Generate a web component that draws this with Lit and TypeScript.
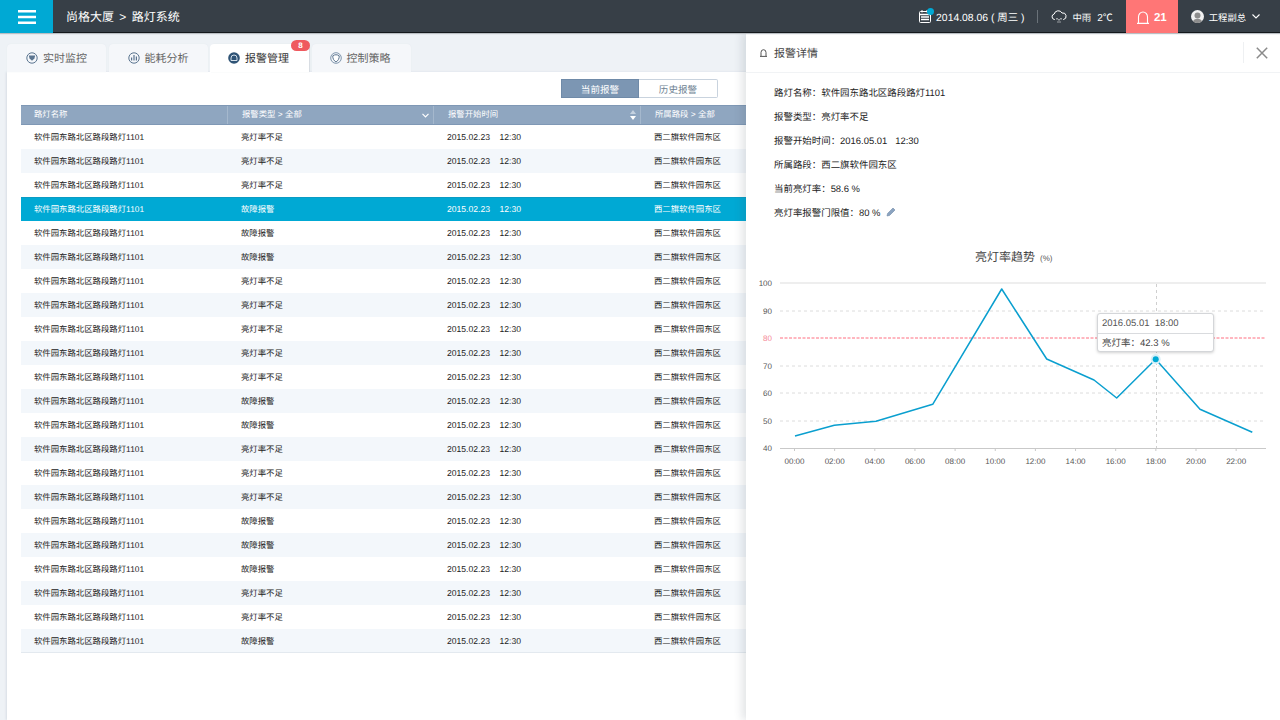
import { LitElement, html, css, svg } from "lit";
import { customElement } from "lit/decorators.js";

const A = "亮灯率不足";
const B = "故障报警";
const kinds = [A,A,A,B,B,B,A,A,A,A,A,B,B,A,A,A,B,B,B,A,A,B];
const points = "795,436 834.3,425.3 876,421.3 932.7,404.3 1001.7,289 1046.7,359 1094,380 1116.7,398 1155.7,359.3 1200,409.3 1252.3,432.3";
const yTicks: [string, number][] = [["90",311],["70",366],["60",393],["50",421]];
const xLabels = ["00:00","02:00","04:00","06:00","08:00","10:00","12:00","14:00","16:00","18:00","20:00","22:00"];

@customElement("app-root")
export class AppRoot extends LitElement {
  static styles = css`
    :host { display: block; width: 1280px; height: 720px; position: relative; overflow: hidden; text-rendering: geometricPrecision;
      font-family: "Liberation Sans", "Noto Sans CJK SC", sans-serif; background: #eef2f6; color: #333; }
    .page { display: flex; flex-direction: column; height: 720px; }
    svg { display: block; flex: none; }

    header { height: 33px; flex: none; display: flex; align-items: center; background: #373f47;
      border-bottom: 1px solid #14181c; box-sizing: border-box; box-shadow: 0 1px 1px #b9bec3; color: #fff; position: relative; z-index: 3; }
    .menu { width: 53px; height: 33px; flex: none; background: #00a9d4; display: flex; align-items: center; justify-content: center; margin-bottom: -1px; }
    .crumb { margin-left: 13px; font-size: 12px; word-spacing: 2px; white-space: nowrap; }
    .right { margin-left: auto; display: flex; align-items: center; gap: 13px; height: 33px; margin-bottom: -1px; }
    .date { display: flex; align-items: center; gap: 5px; font-size: 10.4px; white-space: nowrap; }
    .cal { position: relative; }
    .dot { position: absolute; width: 7px; height: 7px; border-radius: 50%; background: #00a9d4; top: -2px; right: -3px; }
    .sep { width: 1px; height: 13px; background: #6a7279; }
    .weather { display: flex; align-items: center; gap: 5px; font-size: 9.4px; white-space: nowrap; }
    .temp { margin-left: 1px; font-size: 10px; }
    .alert { width: 52px; height: 33px; box-sizing: border-box; padding-top: 2px; background: #ff7676; display: flex; align-items: center; justify-content: center; gap: 5px; font-size: 11.5px; font-weight: bold; }
    .user { display: flex; align-items: center; gap: 5px; font-size: 9.3px; white-space: nowrap; margin-right: 20px; }
    .chev { margin-left: 1px; }

    main { flex: 1; display: flex; flex-direction: column; padding: 11px 0 0 7px; min-height: 0; }
    .tabs { display: flex; gap: 2.5px; height: 28px; flex: none; }
    .tab { width: 99px; box-sizing: border-box; background: #f5f7fa; border-radius: 4px 4px 0 0; display: flex; align-items: center; justify-content: center; gap: 5px; font-size: 11px; color: #666; position: relative; box-shadow: 0 0 1px #dfe5ea; }
    .tab.on { background: #fff; color: #333; box-shadow: 1px 0 1px #d5dbe1; z-index: 1; padding-right: 2px; }
    .tab.end { padding-right: 2px; }
    .badge { position: absolute; right: -1px; top: -4px; width: 19px; height: 11px; border-radius: 6px; background: #ef5a5f; color: #fff; font-size: 8px; line-height: 11px; text-align: center; font-weight: bold; }
    .panel { flex: 1; background: #fff; padding: 7px 0 0 14px; box-shadow: -1px 0 2px #d8dee5; }
    .bar { display: flex; justify-content: flex-end; width: 697px; height: 19px; }
    .seg { width: 78px; height: 19px; box-sizing: border-box; font-size: 9.6px; display: flex; align-items: center; justify-content: center; color: #6d7f92; background: #fff; border: 1px solid #c9d3de; }
    .seg.on { background: #7c96b3; color: #fff; border-color: #6f8aa8; }
    .seg.off { border-left: none; width: 79px; border-radius: 0 2px 2px 0; }

    .table { margin-top: 7px; width: 725px; overflow: hidden; font-size: 8.4px; }
    .row { display: grid; grid-template-columns: 206px 206px 207px 106px; height: 24px; box-sizing: border-box; padding-bottom: 1px; align-items: center; color: #222; white-space: nowrap; }
    .row > div { padding-left: 14px; }
    .row > div:first-child { padding-left: 13px; }
    .row.alt { background: #f3f7fb; }
    .row.sel { background: #00a9d4; color: #fff; border-top: 1px solid #0a9cc4; padding-bottom: 2px; }
    .row.last { border-bottom: 1px solid #e3e9ef; padding-bottom: 0; }
    .num { font-size: 8.6px; }
    .thead { height: 20px; padding-bottom: 0; background: #8fa6c0; border-top: 1px solid #7f98b5; border-bottom: 1px solid #7f98b5; color: #fff; }
    .thead > div { height: 18px; display: flex; align-items: center; justify-content: space-between; box-sizing: border-box; padding-right: 4px; padding-bottom: 2px; }
    .thead > div + div { border-left: 1px solid #a5b8cd; }
    .thead svg { margin-top: 2px; }

    .drawer { position: absolute; left: 746px; top: 33px; right: 0; bottom: 0; background: #fff; box-shadow: -4px 0 8px rgba(60,70,85,.14); z-index: 2; }
    .dhead { height: 40px; box-sizing: border-box; border-bottom: 1px solid #f1f3f5; display: flex; align-items: center; padding-left: 14px; gap: 7px; font-size: 11px; color: #444; }
    .close { margin-left: auto; width: 37px; height: 21px; box-sizing: border-box; border-left: 1px solid #eef0f2; display: flex; align-items: center; justify-content: center; }
    .details { padding: 7px 0 0 28px; font-size: 9.45px; color: #222; }
    .details div { height: 24px; display: flex; align-items: center; white-space: pre; }
    .details svg { margin-left: 6px; }
    .ctitle { margin-top: 23px; height: 20px; line-height: 20px; padding-left: 229px; font-size: 12px; color: #444; white-space: nowrap; }
    .ctitle span { font-size: 8px; margin-left: 5px; color: #555; }
    .chart { margin-top: 3px; position: relative; width: 534px; height: 210px; }
    .tip { position: absolute; left: 351px; top: 43px; width: 117px; height: 39px; box-sizing: border-box; background: #fff; border: 1px solid #d4d6d9; border-radius: 3px; box-shadow: 0 1px 3px rgba(0,0,0,.18); font-size: 9.5px; color: #555; }
    .tip div { height: 19px; line-height: 19px; padding-left: 4px; white-space: pre; }
    .tip div + div { border-top: 1px solid #d9dbde; color: #444; }
    text { font-family: "Liberation Sans", sans-serif; font-size: 8px; fill: #555; }
  `;

  private tabIcon(kind: number) {
    if (kind === 0) return html`<svg width="12" height="12" viewBox="0 0 12 12"><circle cx="6" cy="6" r="5.2" fill="none" stroke="#5b7590" stroke-width="1"/><path d="M2.8 3.6h6.4L8.4 6.4 6 8.8 3.6 6.4z" fill="#5b7590"/></svg>`;
    if (kind === 1) return html`<svg width="12" height="12" viewBox="0 0 12 12"><circle cx="6" cy="6" r="5.2" fill="none" stroke="#5b7590" stroke-width="1"/><path d="M3.6 5.5v3M6 3v5.500M8.400 4.500v4" stroke="#5b7590" stroke-width="1.200" fill="none"/></svg>`;
    if (kind === 2) return html`<svg width="12" height="12" viewBox="0 0 12 12"><circle cx="6" cy="6" r="5.800" fill="#2f5375"/><path d="M3 8.500V6a3 3 0 0 1 6 0v2.500z" fill="none" stroke="#d5e0ea" stroke-width="1"/></svg>`;
    return html`<svg width="12" height="12" viewBox="0 0 12 12"><circle cx="6" cy="6" r="5.300" fill="none" stroke="#7f96ad" stroke-width="1"/><path d="M2.800 3.800C4.500 2.400 7.500 2.400 9.200 3.800 9.500 6.500 8 8.800 6 10 4 8.800 2.500 6.500 2.800 3.800z" fill="#fff" stroke="#5b7590" stroke-width="1"/></svg>`;
  }

  private chart() {
    return html`<svg width="534" height="210" viewBox="746 270 534 210">
      <line x1="780" x2="1266" y1="283" y2="283" stroke="#eeeeee" stroke-width="2"/>
      ${yTicks.map(([, y]) => svg`<line x1="780" x2="1266" y1=${y} y2=${y} stroke="#dcdcdc" stroke-width="1" stroke-dasharray="3 3"/>`)}
      <line x1="780" x2="1266" y1="338" y2="338" stroke="#ff6f80" stroke-width="1" stroke-dasharray="3 1.500"/>
      <line x1="1156.500" x2="1156.500" y1="284" y2="448" stroke="#cfcfcf" stroke-width="1" stroke-dasharray="3 3"/>
      <line x1="780" x2="1266" y1="448.500" y2="448.500" stroke="#c9c9c9" stroke-width="1"/>
      ${xLabels.map((l, i) => {
        const x = 794.5 + i * 40.15;
        return svg`<line x1=${x} x2=${x} y1="449" y2="451" stroke="#c9c9c9"/><text x=${x} y="463.500" text-anchor="middle">${l}</text>`;
      })}
      <text x="772" y="286" text-anchor="end">100</text>
      ${yTicks.map(([t, y]) => svg`<text x="772" y=${y + 3} text-anchor="end">${t}</text>`)}
      <text x="772" y="341" text-anchor="end" style="fill:#f58a96">80</text>
      <text x="772" y="451" text-anchor="end">40</text>
      <polyline points=${points} fill="none" stroke="#0a9fcf" stroke-width="1.500" stroke-linejoin="round"/>
      <circle cx="1155.700" cy="359.300" r="5" fill="#d8f0f8"/>
      <circle cx="1155.700" cy="359.300" r="3" fill="#00a9d4"/>
    </svg>`;
  }

  render() {
    return html`<div class="page">
      <header>
        <div class="menu"><svg width="18" height="14" viewBox="0 0 18 14"><path d="M0 1.250h18M0 7h18M0 12.750h18" stroke="#fff" stroke-width="2.500"/></svg></div>
        <div class="crumb">尚格大厦 &gt; 路灯系统</div>
        <div class="right">
          <div class="date"><span class="cal"><svg width="12" height="13" viewBox="0 0 12 13"><rect x=".5" y="1.500" width="11" height="11" rx="1" fill="none" stroke="#fff"/><path d="M0 4.500h12M2 7h8M2 9.500h8" stroke="#fff" stroke-width="1.300"/><path d="M3 0v2.500M8 0v2.500" stroke="#fff"/></svg><i class="dot"></i></span><span>2014.08.06 ( 周三 )</span></div>
          <div class="sep"></div>
          <div class="weather"><svg width="16" height="13" viewBox="0 0 16 13"><path d="M4 9.500H3.500a2.800 2.800 0 0 1-.3-5.500A4.200 4.200 0 0 1 11 3a3.200 3.200 0 0 1 1.500 6.500H12" fill="none" stroke="#fff"/><path d="M6 8v1.500M8 9v1.500M10 8v1.500M7 11.500v1M9 11.500v1" stroke="#fff"/></svg><span>中雨</span><span class="temp">2℃</span></div>
          <div class="alert"><svg width="12" height="13" viewBox="0 0 12 13"><path d="M1.500 12V6a4.500 5 0 0 1 9 0v6M0 12.400h12" fill="none" stroke="#fff" stroke-width="1.100"/></svg><span>21</span></div>
          <div class="user"><svg width="13" height="13" viewBox="0 0 13 13"><circle cx="6.500" cy="6.500" r="6.500" fill="#f1f1f1"/><circle cx="6.500" cy="5.500" r="3" fill="#8d8d8d"/><path d="M2 11a5 4 0 0 1 9 0 6 6 0 0 1-9 0z" fill="#8d8d8d"/></svg><span>工程副总</span><svg class="chev" width="8" height="5" viewBox="0 0 8 5"><path d="M.5.500 4 4 7.500.500" fill="none" stroke="#fff" stroke-width="1.100"/></svg></div>
        </div>
      </header>
      <main>
        <div class="tabs">
          <div class="tab">${this.tabIcon(0)}实时监控</div>
          <div class="tab">${this.tabIcon(1)}能耗分析</div>
          <div class="tab on">${this.tabIcon(2)}报警管理<span class="badge">8</span></div>
          <div class="tab end">${this.tabIcon(3)}控制策略</div>
        </div>
        <div class="panel">
          <div class="bar"><div class="seg on">当前报警</div><div class="seg off">历史报警</div></div>
          <div class="table">
            <div class="row thead">
              <div>路灯名称</div>
              <div>报警类型 &gt; 全部<svg width="7" height="5" viewBox="0 0 7 5"><path d="M.5.800 3.500 3.800 6.500.800" fill="none" stroke="#fff" stroke-width="1.200"/></svg></div>
              <div>报警开始时间<svg width="6" height="10" viewBox="0 0 6 10"><path d="M3 0 6 4H0z" fill="#c5d2e0"/><path d="M3 10 6 6H0z" fill="#fff"/></svg></div>
              <div>所属路段 &gt; 全部</div>
            </div>
            ${kinds.map((k, i) => html`<div class="row ${i === 3 ? "sel" : i % 2 ? "alt" : ""} ${i === 21 ? "last" : ""}">
              <div>软件园东路北区路段路灯1101</div>
              <div>${k}</div>
              <div class="num">2015.02.23&nbsp;&nbsp;&nbsp;&nbsp;12:30</div>
              <div>西二旗软件园东区</div>
            </div>`)}
          </div>
        </div>
      </main>
      <aside class="drawer">
        <div class="dhead"><svg width="7" height="8" viewBox="0 0 7 8"><path d="M1 7V3.500a2.500 2.800 0 0 1 5 0V7M0 7.400h7" fill="none" stroke="#555"/></svg><span>报警详情</span>
          <div class="close"><svg width="12" height="12" viewBox="0 0 12 12"><path d="M.8.800 11.200 11.200M11.200.800.8 11.200" stroke="#8a8a8a" stroke-width="1.500"/></svg></div>
        </div>
        <div class="details">
          <div>路灯名称：软件园东路北区路段路灯1101</div>
          <div>报警类型：亮灯率不足</div>
          <div>报警开始时间：2016.05.01   12:30</div>
          <div>所属路段：西二旗软件园东区</div>
          <div>当前亮灯率：58.6 %</div>
          <div>亮灯率报警门限值：80 %<svg width="10" height="10" viewBox="0 0 10 10"><path d="M1 9l.6-2.600L7 1l2 2-5.400 5.400z" fill="#8ba3c0" stroke="#6f8aa8" stroke-width=".6"/></svg></div>
        </div>
        <div class="ctitle">亮灯率趋势<span>(%)</span></div>
        <div class="chart">
          ${this.chart()}
          <div class="tip"><div>2016.05.01  18:00</div><div>亮灯率：42.3 %</div></div>
        </div>
      </aside>
    </div>`;
  }
}
